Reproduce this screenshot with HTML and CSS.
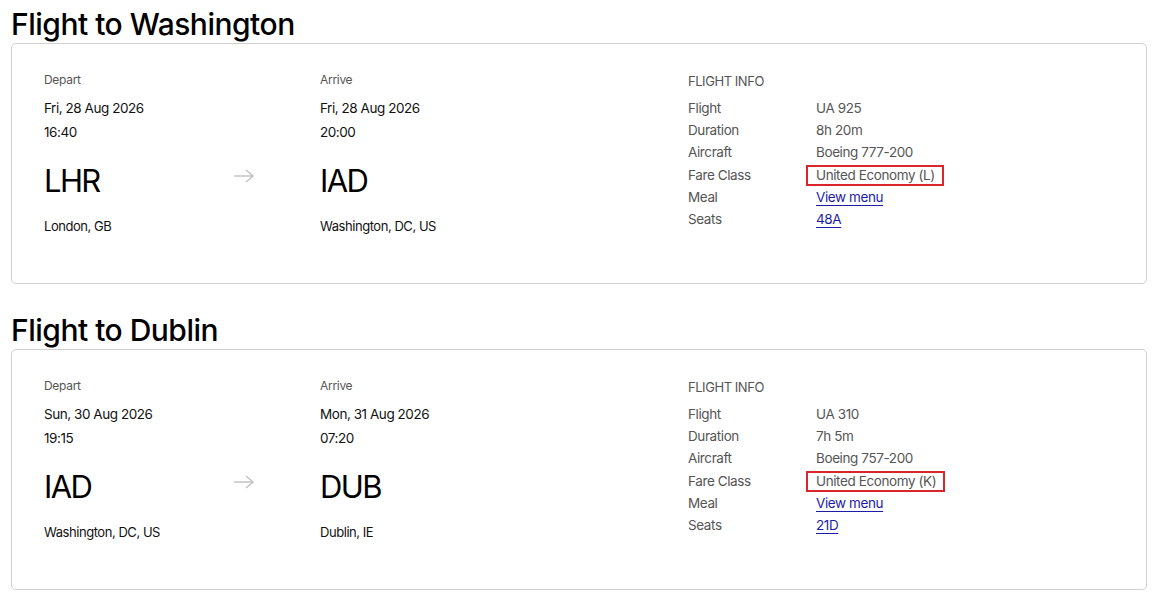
FILE: index.html
```html
<!DOCTYPE html>
<html>
<head>
    <title>Your flights</title>
    <link rel="stylesheet" href="styles.css">
</head>
<body>
    <!-- Outbound -->
    <h2 class="leg-title">Flight to Washington</h2>
    <div class="leg-card">
        <div class="stop">
            <div class="stop-label">Depart</div>
            <div class="stop-text">Fri, 28 Aug 2026</div>
            <div class="stop-text">16:40</div>
            <div class="stop-code">LHR</div>
            <div class="stop-text stop-city">London, GB</div>
        </div>
        <div class="leg-arrow">
            <svg width="22" height="14" viewBox="0 0 22 14"><path d="M1 7h19M13 1l7 6-7 6" fill="none" stroke="#c4c4c4" stroke-width="1.6"/></svg>
        </div>
        <div class="stop">
            <div class="stop-label">Arrive</div>
            <div class="stop-text">Fri, 28 Aug 2026</div>
            <div class="stop-text">20:00</div>
            <div class="stop-code">IAD</div>
            <div class="stop-text stop-city">Washington, DC, US</div>
        </div>
        <div class="info">
            <div class="info-title">FLIGHT INFO</div>
            <div class="info-grid">
                <span>Flight</span><span>UA 925</span>
                <span>Duration</span><span>8h 20m</span>
                <span>Aircraft</span><span>Boeing 777-200</span>
                <span>Fare Class</span><span><span class="fare-box">United Economy (L)</span></span>
                <span>Meal</span><span><a href="#">View menu</a></span>
                <span>Seats</span><span><a href="#">48A</a></span>
            </div>
        </div>
    </div>

    <!-- Return -->
    <h2 class="leg-title">Flight to Dublin</h2>
    <div class="leg-card">
        <div class="stop">
            <div class="stop-label">Depart</div>
            <div class="stop-text">Sun, 30 Aug 2026</div>
            <div class="stop-text">19:15</div>
            <div class="stop-code">IAD</div>
            <div class="stop-text stop-city">Washington, DC, US</div>
        </div>
        <div class="leg-arrow">
            <svg width="22" height="14" viewBox="0 0 22 14"><path d="M1 7h19M13 1l7 6-7 6" fill="none" stroke="#c4c4c4" stroke-width="1.6"/></svg>
        </div>
        <div class="stop">
            <div class="stop-label">Arrive</div>
            <div class="stop-text">Mon, 31 Aug 2026</div>
            <div class="stop-text">07:20</div>
            <div class="stop-code">DUB</div>
            <div class="stop-text stop-city">Dublin, IE</div>
        </div>
        <div class="info">
            <div class="info-title">FLIGHT INFO</div>
            <div class="info-grid">
                <span>Flight</span><span>UA 310</span>
                <span>Duration</span><span>7h 5m</span>
                <span>Aircraft</span><span>Boeing 757-200</span>
                <span>Fare Class</span><span><span class="fare-box">United Economy (K)</span></span>
                <span>Meal</span><span><a href="#">View menu</a></span>
                <span>Seats</span><span><a href="#">21D</a></span>
            </div>
        </div>
    </div>
</body>
</html>
```

FILE: styles.css
```css
body {
    margin: 0;
    padding: 6px 5px 0 11px;
    font-family: Inter, "Noto Sans", sans-serif;
    color: #111;
    background: #fff;
}

.leg-title {
    margin: 0 0 1px 0;
    font-size: 30px;
    line-height: 36px;
    font-weight: 500;
    letter-spacing: -0.5px;
    color: #000;
}

.leg-card + .leg-title {
    margin-top: 28px;
}

.leg-card {
    border: 1px solid #d0d0d0;
    border-radius: 5px;
    padding: 28px 32px 45px 32px;
    display: grid;
    grid-template-columns: 189px 87px 368px 1fr; /* depart | arrow | arrive | info */
}

.stop-label {
    font-size: 12px;
    line-height: 16px;
    color: #555;
    letter-spacing: -0.3px;
    margin-bottom: 8px;
}

.stop-text {
    font-size: 13.5px;
    line-height: 24px;
    letter-spacing: -0.45px;
    color: #111;
}

.stop-code {
    font-size: 31px;
    line-height: 40px;
    margin-top: 17px;
    letter-spacing: -1.6px;
    color: #000;
}

.stop-city {
    margin-top: 13px;
    font-size: 13px;
}

.leg-arrow {
    padding-top: 95px;
}

.info-title {
    font-size: 13px;
    line-height: 16px;
    color: #555;
    letter-spacing: -0.45px;
    margin-top: 1px;
    margin-bottom: 8px;
}

.info-grid {
    display: grid;
    grid-template-columns: 128px 1fr;
    grid-auto-rows: 22.2px;
    font-size: 13.5px;
    line-height: 22px;
    letter-spacing: -0.4px;
    color: #555;
}

.info-grid a {
    color: #1c1ca8;
    text-decoration: underline;
    text-underline-offset: 3px;
}

.fare-box {
    display: inline-block;
    border: 2px solid #d9262c;
    line-height: 17px;
    padding: 0 7px 0 8px;
    margin-left: -10px;
    margin-top: 1px;
}
```
